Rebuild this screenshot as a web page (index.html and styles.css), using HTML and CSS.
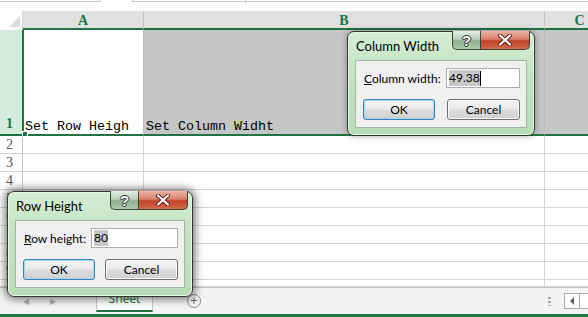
FILE: index.html
```html
<!DOCTYPE html>
<html lang="en">
<head>
  <meta charset="UTF-8" />
  <title>Row Height / Column Width</title>
  <link rel="stylesheet" href="styles.css">
</head>
<body>

<div class="excel">
  <div class="formula-strip">
    <div class="name-box"></div>
    <div class="formula-box"><span class="tick"></span></div>
  </div>

  <div class="col-headers">
    <div class="corner"><span class="tri"></span></div>
    <div class="col-head col-a">A</div>
    <div class="col-head col-b">B</div>
    <div class="col-head col-c">C</div>
  </div>

  <!-- row 1: whole row selected -->
  <div class="row row-sel">
    <div class="row-head">1</div>
    <div class="cell col-a active">Set Row Heigh<span class="fill-handle"></span></div>
    <div class="cell col-b">Set Column Widht</div>
    <div class="cell col-c"></div>
  </div>
  <div class="row"><div class="row-head">2</div><div class="cell col-a"></div><div class="cell col-b"></div><div class="cell col-c"></div></div>
  <div class="row"><div class="row-head">3</div><div class="cell col-a"></div><div class="cell col-b"></div><div class="cell col-c"></div></div>
  <div class="row"><div class="row-head">4</div><div class="cell col-a"></div><div class="cell col-b"></div><div class="cell col-c"></div></div>
  <div class="row"><div class="row-head">5</div><div class="cell col-a"></div><div class="cell col-b"></div><div class="cell col-c"></div></div>
  <div class="row"><div class="row-head">6</div><div class="cell col-a"></div><div class="cell col-b"></div><div class="cell col-c"></div></div>
  <div class="row"><div class="row-head">7</div><div class="cell col-a"></div><div class="cell col-b"></div><div class="cell col-c"></div></div>
  <div class="row"><div class="row-head">8</div><div class="cell col-a"></div><div class="cell col-b"></div><div class="cell col-c"></div></div>
  <div class="row"><div class="row-head">9</div><div class="cell col-a"></div><div class="cell col-b"></div><div class="cell col-c"></div></div>
  <div class="row row-last"><div class="row-head"></div><div class="cell col-a"></div><div class="cell col-b"></div><div class="cell col-c"></div></div>

  <div class="sheet-bar">
    <span class="nav">&#9664;</span>
    <span class="nav">&#9654;</span>
    <div class="sheet-tab">Sheet</div>
    <span class="add-sheet">+</span>
    <span class="spacer"></span>
    <span class="dots"></span>
    <div class="hscroll">
      <span class="scroll-btn"><span class="arrow-left"></span></span>
      <span class="scroll-track"></span>
    </div>
  </div>
  <div class="status-bar"></div>

  <!-- Column Width dialog -->
  <div class="dialog dlg-col">
    <div class="dlg-title">Column Width</div>
    <div class="cap-btns">
      <span class="cap-help">?</span>
      <span class="cap-close">
        <svg width="16" height="12" viewBox="0 0 16 12">
          <path d="M3 1.5 L13 10.5 M13 1.5 L3 10.5" stroke="#5a1d12" stroke-width="4" stroke-linecap="round"/>
          <path d="M3 1.5 L13 10.5 M13 1.5 L3 10.5" stroke="#fff" stroke-width="2.2" stroke-linecap="round"/>
        </svg>
      </span>
    </div>
    <div class="dlg-panel">
      <div class="field">
        <label><u>C</u>olumn width:</label>
        <div class="textbox"><span class="sel-text">49.38</span><span class="caret"></span></div>
      </div>
      <div class="buttons">
        <button class="btn default">OK</button>
        <button class="btn">Cancel</button>
      </div>
    </div>
  </div>

  <!-- Row Height dialog -->
  <div class="dialog dlg-row">
    <div class="dlg-title">Row Height</div>
    <div class="cap-btns">
      <span class="cap-help">?</span>
      <span class="cap-close">
        <svg width="16" height="12" viewBox="0 0 16 12">
          <path d="M3 1.5 L13 10.5 M13 1.5 L3 10.5" stroke="#5a1d12" stroke-width="4" stroke-linecap="round"/>
          <path d="M3 1.5 L13 10.5 M13 1.5 L3 10.5" stroke="#fff" stroke-width="2.2" stroke-linecap="round"/>
        </svg>
      </span>
    </div>
    <div class="dlg-panel">
      <div class="field">
        <label><u>R</u>ow height:</label>
        <div class="textbox wide"><span class="sel-text">80</span></div>
      </div>
      <div class="buttons">
        <button class="btn default">OK</button>
        <button class="btn">Cancel</button>
      </div>
    </div>
  </div>
</div>

</body>
</html>
```

FILE: styles.css
```css
body {
  margin: 0;
  background: #fff;
}

.excel {
  position: relative;
  width: 588px;
  height: 317px;
  overflow: hidden;
  background: #fff;
}

/* strip left from the formula bar */
.formula-strip {
  height: 11px;
  display: flex;
}

.name-box {
  width: 100px;
  height: 1px;
  border-bottom: 1px solid #c6c6c6;
  border-right: 1px solid #c6c6c6;
}

.formula-box {
  position: relative;
  margin-left: 31px;
  flex: 1;
  height: 1px;
  border-bottom: 1px solid #c6c6c6;
  border-left: 1px solid #c6c6c6;
}

.formula-box .tick {
  position: absolute;
  left: 112px;
  top: 0;
  height: 4px;
  border-left: 1px solid #d0d0d0;
}

/* column headers */
.col-headers {
  display: flex;
  height: 19px;
}

.corner {
  position: relative;
  flex: none;
  width: 22px;
  border-right: 1px solid #d4d4d4;
  background: #fff;
}

.corner .tri {
  position: absolute;
  right: 2px;
  bottom: 3px;
  width: 0;
  height: 0;
  border-left: 11px solid transparent;
  border-bottom: 11px solid #dcdcdc;
}

.col-head {
  box-sizing: border-box;
  background: #e1e1e1;
  border-right: 1px solid #c6c6c6;
  border-bottom: 2px solid #217346;
  color: #217346;
  font-family: "Liberation Serif", serif;
  font-weight: bold;
  font-size: 14px;
  text-align: center;
  line-height: 19px;
}

.col-a { width: 121px; flex: none; }
.col-b { width: 401px; flex: none; }
.col-c { width: 70px; flex: none; }

/* rows */
.row {
  display: flex;
  height: 18px;
}

.row-head {
  box-sizing: border-box;
  width: 23px;
  flex: none;
  border-right: 1px solid #c6c6c6;
  border-bottom: 1px solid #d4d4d4;
  padding-left: 6px;
  font-family: "Liberation Serif", serif;
  font-size: 14px;
  line-height: 18px;
  color: #555;
}

.cell {
  box-sizing: border-box;
  border-right: 1px solid #d4d4d4;
  border-bottom: 1px solid #d4d4d4;
}

.row-last { height: 7px; }

.row-sel {
  height: 106px;
}

.row-sel .row-head {
  background: #d3ecdd;
  color: #217346;
  font-weight: bold;
  border-right: 1px solid #217346;
  border-bottom: 2px solid #217346;
  display: flex;
  align-items: flex-end;
  padding-bottom: 1px;
}

.row-sel .cell {
  position: relative;
  background: #c6c6c6;
  border-right-color: #bdbdbd;
  border-bottom: 2px solid #217346;
  font-family: "Liberation Mono", monospace;
  font-size: 13.33px;
  line-height: 14px;
  color: #000;
  display: flex;
  align-items: flex-end;
  padding: 0 0 0 2px;
  white-space: nowrap;
}

.row-sel .cell.active {
  background: #fff;
  border-left: 1px solid #217346;
  padding-left: 1px;
}

.fill-handle {
  position: absolute;
  left: -2px;
  bottom: -3px;
  width: 4px;
  height: 4px;
  background: #217346;
  border: 1px solid #fff;
}

/* sheet tabs bar */
.sheet-bar {
  box-sizing: border-box;
  height: 27px;
  border-top: 1px solid #c6c6c6;
  background: #f3f3f3;
  display: flex;
  align-items: flex-start;
  font-family: "Noto Sans", sans-serif;
}

.nav {
  width: 27px;
  text-align: center;
  font-size: 8px;
  color: #b0b0b0;
  line-height: 26px;
  margin-left: 0;
}

.nav:first-child { margin-left: 12px; }

.sheet-tab {
  box-sizing: border-box;
  margin-left: 30px;
  width: 57px;
  height: 24px;
  background: #fff;
  border: 1px solid #c6c6c6;
  border-top: none;
  border-bottom: 2px solid #217346;
  color: #217346;
  font-size: 12px;
  text-align: center;
  line-height: 22px;
}

.add-sheet {
  box-sizing: border-box;
  width: 14px;
  height: 14px;
  margin: 6px 0 0 34px;
  border: 1px solid #8a8a8a;
  border-radius: 50%;
  color: #666;
  font-size: 13px;
  line-height: 11px;
  text-align: center;
}

.spacer { flex: 1; }

.dots {
  width: 3px;
  height: 10px;
  margin: 8px 13px 0 0;
  background: radial-gradient(circle, #9a9a9a 1px, transparent 1.5px) 0 0 / 3px 4px;
}

.hscroll {
  display: flex;
  margin-top: 5px;
  margin-right: -12px;
}

.scroll-btn {
  box-sizing: border-box;
  width: 16px;
  height: 16px;
  border: 1px solid #ababab;
  background: #fff;
  display: flex;
  align-items: center;
  justify-content: center;
}

.arrow-left {
  width: 0;
  height: 0;
  border-top: 4px solid transparent;
  border-bottom: 4px solid transparent;
  border-right: 4px solid #606060;
}

.scroll-track {
  box-sizing: border-box;
  width: 20px;
  height: 16px;
  border: 1px solid #ababab;
  border-left: none;
  background: #fff;
}

.status-bar {
  height: 3px;
  background: #217346;
}

/* dialogs */
.dialog {
  position: absolute;
  box-sizing: border-box;
  border: 1px solid #2f3a2f;
  border-radius: 7px;
  background: linear-gradient(#d6eed5, #c3e3c2 40%, #b9dcb8);
  box-shadow: inset 0 0 0 1px #e8f6e7, 0 0 6px rgba(0, 0, 0, 0.35);
  font-family: Lato, "Noto Sans", sans-serif;
  font-size: 12px;
  color: #000;
}

.dlg-col {
  left: 347px;
  top: 31px;
  width: 188px;
  height: 105px;
}

.dlg-row {
  left: 7px;
  top: 191px;
  width: 186px;
  height: 106px;
  box-shadow: inset 0 0 0 1px #e8f6e7, 0 0 8px 2px rgba(0, 0, 0, 0.55);
}

.dlg-title {
  padding: 5px 0 0 8px;
  height: 22px;
  box-sizing: border-box;
  line-height: 18px;
  font-size: 13px;
}

.cap-btns {
  position: absolute;
  top: -1px;
  right: 4px;
  display: flex;
}

.cap-help,
.cap-close {
  box-sizing: border-box;
  height: 19px;
  border: 1px solid #3b463b;
  border-top: none;
  display: flex;
  align-items: center;
  justify-content: center;
}

.cap-help {
  width: 28px;
  border-right: none;
  border-radius: 0 0 0 5px;
  background: linear-gradient(#e4eee4, #b9cfb9 45%, #8fae8f 55%, #aecaae);
  color: #fff;
  font-family: "Liberation Sans", sans-serif;
  font-weight: bold;
  font-size: 15px;
  line-height: 15px;
  text-shadow: 0 0 1px #222, 0 0 1px #222, 1px 0 0 #444, -1px 0 0 #444, 0 1px 0 #444, 0 -1px 0 #444;
}

.cap-close {
  width: 50px;
  border-radius: 0 0 5px 0;
  background: linear-gradient(#eeb3a6, #d9806c 45%, #c2412a 55%, #d46a4c);
}

.dlg-panel {
  box-sizing: border-box;
  margin: 6px 7px 0 7px;
  height: 68px;
  background: #f0f0f0;
  border: 1px solid #9fb89f;
  padding: 7px 6px 0 7px;
}

.field {
  display: flex;
  align-items: center;
  height: 20px;
}

.field label {
  flex: 1;
  padding-left: 1px;
}

.textbox {
  box-sizing: border-box;
  width: 74px;
  height: 20px;
  background: #fff;
  border: 1px solid #abadb3;
  padding: 1px 2px;
  display: flex;
  align-items: center;
  line-height: 16px;
}

.textbox.wide { width: 87px; }

.sel-text {
  background: #c8c8c8;
}

.caret {
  width: 1px;
  height: 15px;
  background: #000;
}

.buttons {
  display: flex;
  justify-content: space-between;
  margin-top: 11px;
}

.btn {
  box-sizing: border-box;
  width: 73px;
  height: 21px;
  border: 1px solid #707070;
  border-radius: 3px;
  background: linear-gradient(#f2f2f2, #ebebeb 49%, #dddddd 51%, #cfcfcf);
  font-family: Lato, "Noto Sans", sans-serif;
  font-size: 12px;
  color: #000;
  padding: 0;
  box-shadow: inset 0 0 0 1px #fafafa;
}

.btn.default {
  width: 72px;
  border-color: #3c7fb1;
  box-shadow: inset 0 0 0 1px #9fdcf7;
}
```
